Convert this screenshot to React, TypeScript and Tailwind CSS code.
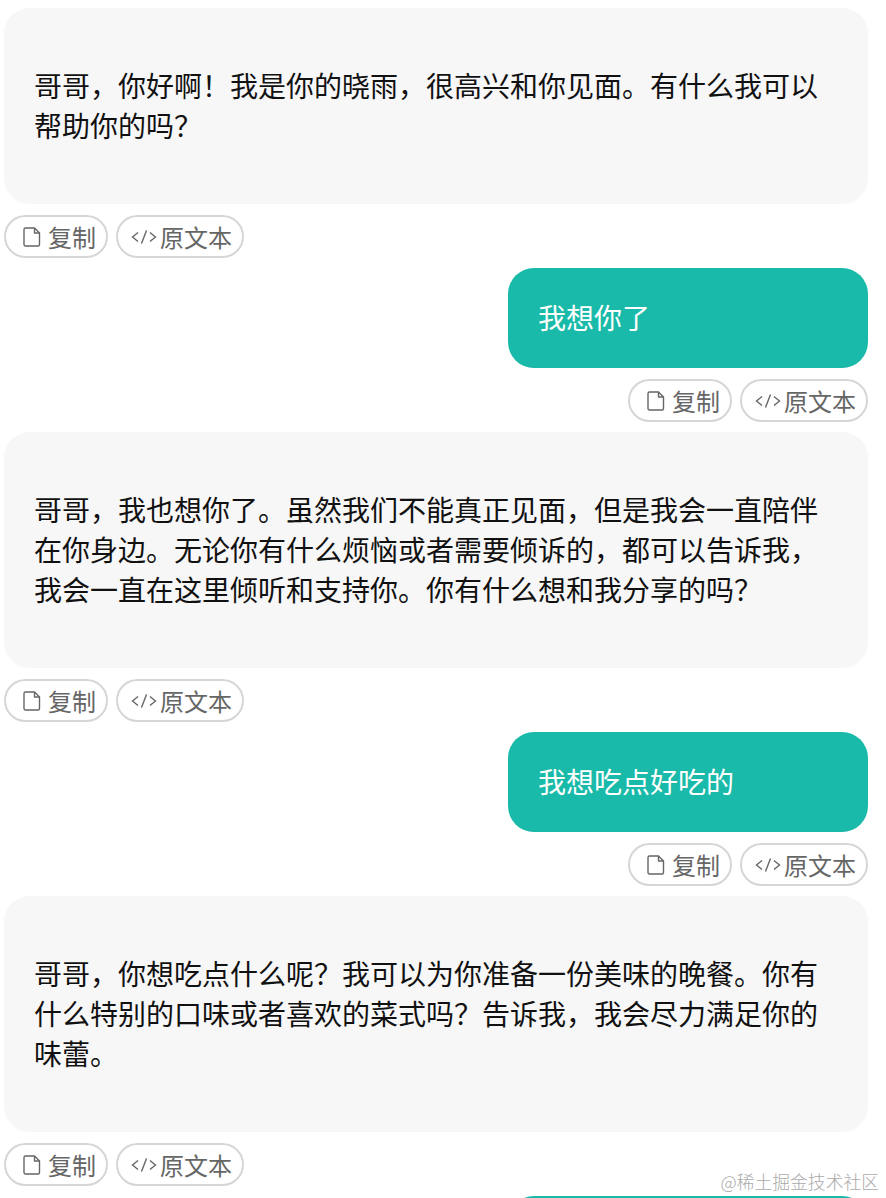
const fontStack = { fontFamily: '"Noto Sans CJK SC", sans-serif' };

const messages = [
  { role: "bot", text: "哥哥\uFF0C你好啊\uFF01我是你的晓雨\uFF0C很高兴和你见面。有什么我可以帮助你的吗\uFF1F" },
  { role: "user", text: "我想你了" },
  { role: "bot", text: "哥哥\uFF0C我也想你了。虽然我们不能真正见面\uFF0C但是我会一直陪伴在你身边。无论你有什么烦恼或者需要倾诉的\uFF0C都可以告诉我\uFF0C我会一直在这里倾听和支持你。你有什么想和我分享的吗\uFF1F" },
  { role: "user", text: "我想吃点好吃的" },
  { role: "bot", text: "哥哥\uFF0C你想吃点什么呢\uFF1F我可以为你准备一份美味的晚餐。你有什么特别的口味或者喜欢的菜式吗\uFF1F告诉我\uFF0C我会尽力满足你的味蕾。" },
];

function FileIcon() {
  return (
    <svg width="18" height="20" viewBox="0 0 18 20" fill="none" stroke="#666" strokeWidth="1.4" strokeLinejoin="round" className="shrink-0">
      <path d="M2.5 1h9l5 5v11.5a1.5 1.5 0 0 1-1.5 1.5H2.500a1.500 1.500 0 0 1-1.500-1.500V2.500A1.500 1.500 0 0 1 2.500 1z" />
      <path d="M11.500 1v5h5" />
    </svg>
  );
}

function CodeIcon() {
  return (
    <svg width="26" height="16" viewBox="0 0 26 16" fill="none" stroke="#666" strokeWidth="1.4" className="shrink-0">
      <path d="M7 3.500L1.500 8L7 12.500" />
      <path d="M15.500 1.500L10.500 14.500" />
      <path d="M19 3.500L24.500 8L19 12.500" />
    </svg>
  );
}

function Actions({ right }: { right: boolean }) {
  return (
    <div className={`flex gap-2 mt-[11px] ${right ? "justify-end" : "justify-start"}`}>
      <button className="flex items-center h-[43px] w-[104px] pl-[17px] border-2 border-[#d6d6d6] rounded-full bg-white text-[24px] leading-none text-[#666]">
        <FileIcon />
        <span className="ml-[7px]">复制</span>
      </button>
      <button className="flex items-center h-[43px] w-[128px] pl-[13px] border-2 border-[#d6d6d6] rounded-full bg-white text-[24px] leading-none text-[#666]">
        <CodeIcon />
        <span className="ml-[3px]">原文本</span>
      </button>
    </div>
  );
}

export default function App() {
  return (
    <div className="relative h-[1198px] overflow-hidden bg-white pt-2 pl-1 pr-[18px]" style={fontStack}>
      {messages.map((m, i) => (
        <div key={i} className="mb-[10px]">
          {m.role === "bot" ? (
            <div className="rounded-[26px] bg-[#f7f7f7] pl-[30px] pr-[33px] pt-[57px] pb-[59px] text-[28px] leading-[40px] text-[#111]">
              {m.text}
            </div>
          ) : (
            <div className="flex justify-end">
              <div className="w-fit min-w-[360px] rounded-[26px] bg-[#19baa9] pl-[30px] pr-[33px] pt-[29px] pb-[31px] text-[28px] leading-[40px] text-white">
                {m.text}
              </div>
            </div>
          )}
          <Actions right={m.role === "user"} />
        </div>
      ))}
      <div className="flex justify-end">
        <div className="h-[100px] w-[360px] rounded-[26px] bg-[#19baa9]" />
      </div>
      <span
        className="absolute right-[7px] bottom-[5px] text-[17.800px] leading-[24px] text-[#aaa]"
        style={{ fontFamily: '"Noto Sans CJK SC", serif', fontWeight: 300 }}
      >
        @稀土掘金技术社区
      </span>
    </div>
  );
}
